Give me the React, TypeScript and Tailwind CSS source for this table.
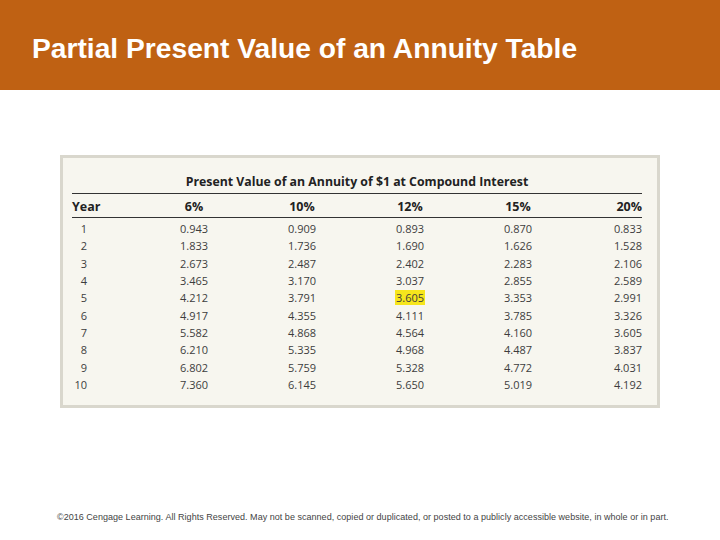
import React from 'react';

const cols = ['6%', '10%', '12%', '15%', '20%'];

const rows: string[][] = [
  ['0.943', '0.909', '0.893', '0.870', '0.833'],
  ['1.833', '1.736', '1.690', '1.626', '1.528'],
  ['2.673', '2.487', '2.402', '2.283', '2.106'],
  ['3.465', '3.170', '3.037', '2.855', '2.589'],
  ['4.212', '3.791', '3.605', '3.353', '2.991'],
  ['4.917', '4.355', '4.111', '3.785', '3.326'],
  ['5.582', '4.868', '4.564', '4.160', '3.605'],
  ['6.210', '5.335', '4.968', '4.487', '3.837'],
  ['6.802', '5.759', '5.328', '4.772', '4.031'],
  ['7.360', '6.145', '5.650', '5.019', '4.192'],
];

const grid = 'grid grid-cols-[68px_108px_108px_108px_108px_70px]';

export default function App() {
  return (
    <div className="w-[720px] h-[540px] bg-white overflow-hidden">
      {/* title band */}
      <div className="h-[90px] bg-[#bf6113] pl-[32px] pt-[32px]">
        <h1 className="text-white text-[28.2px] leading-[32px] font-bold font-['Liberation_Sans',Arial,sans-serif]">
          Partial Present Value of an Annuity Table
        </h1>
      </div>

      {/* table card */}
      <div className="ml-[60px] mt-[65px] w-[600px] h-[253px] border-[3px] border-[#d9d7cd] bg-[#f7f6ef] pl-[9px] pr-[15px] font-['Open_Sans',sans-serif]">
        <div className="pt-[15px] pb-[2px] border-b border-[#333] text-center text-[12.3px] leading-[18px] font-bold text-[#222]">
          Present Value of an Annuity of $1 at Compound Interest
        </div>
        <div className={`${grid} h-[24px] pt-[4px] items-center border-b border-[#333] text-[12.5px] font-bold text-[#222]`}>
          <div>Year</div>
          {cols.map((c, i) => (
            <div key={c} className={i === 4 ? 'text-right' : 'text-center'}>
              {c}
            </div>
          ))}
        </div>
        <div className="pt-[2px] text-[11px] text-[#3d3d3d]">
          {rows.map((r, y) => (
            <div key={y} className={`${grid} h-[17.33px] leading-[17.33px]`}>
              <div className="w-[15px] text-right">{y + 1}</div>
              {r.map((v, i) => (
                <div key={i} className={i === 4 ? 'text-right' : 'text-center'}>
                  {y === 4 && i === 2 ? (
                    <span className="bg-[#f7e61c] px-[1px]">{v}</span>
                  ) : (
                    v
                  )}
                </div>
              ))}
            </div>
          ))}
        </div>
      </div>

      {/* footer */}
      <p className="mt-[104px] pl-[57px] text-[9px] leading-[11px] tracking-[0.03px] text-[#444] font-['Liberation_Sans',Arial,sans-serif]">
        ©2016 Cengage Learning. All Rights Reserved. May not be scanned, copied or duplicated, or posted to a publicly accessible website, in whole or in part.
      </p>
    </div>
  );
}
